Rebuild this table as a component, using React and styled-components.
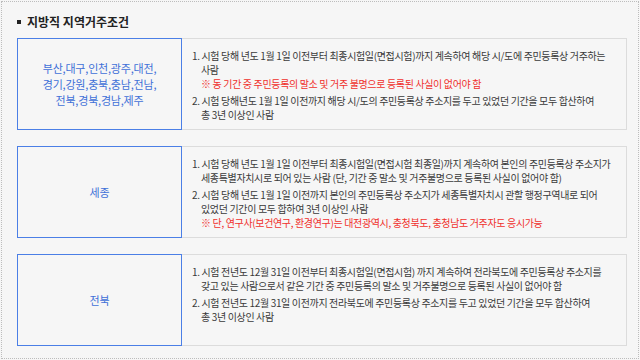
import styled, { createGlobalStyle } from "styled-components";

const GlobalStyle = createGlobalStyle`
  html, body {
    margin: 0;
    background: #f6f6f6;
  }
  body {
    font-family: "Noto Sans CJK KR", "Noto Sans", sans-serif;
    color: #333;
  }
`;

const Frame = styled.div`
  margin: 1px;
  width: 638px;
  height: 358px;
  box-sizing: border-box;
  border: 1px dotted #bdbdbd;
  padding: 10px 11px 0 15px;
`;

const Heading = styled.h2`
  margin: 0 0 6px;
  display: flex;
  align-items: center;
  gap: 6px;
  font-size: 12px;
  line-height: 20px;
  font-weight: 700;
  color: #222;
  font-feature-settings: "palt";
  &::before {
    content: "";
    width: 4px;
    height: 4px;
    background: #222;
  }
`;

const Rows = styled.div`
  display: flex;
  flex-direction: column;
  gap: 16px;
`;

const Row = styled.div`
  display: flex;
  height: 92px;
`;

const Region = styled.div`
  width: 165px;
  box-sizing: border-box;
  border: 1px solid #4b7fe6;
  display: flex;
  align-items: center;
  justify-content: center;
  text-align: center;
  color: #3f70d8;
  font-size: 11px;
  line-height: 16px;
  font-feature-settings: "palt";
  letter-spacing: -0.2px;
`;

const Detail = styled.div`
  flex: 1;
  box-sizing: border-box;
  border: 1px solid #dcdcdc;
  border-left: none;
  padding: 10px 10px;
  display: flex;
  flex-direction: column;
  gap: 3px;
  font-size: 10px;
  line-height: 14px;
  font-feature-settings: "palt";
  letter-spacing: -0.35px;
`;

const Item = styled.div`
  padding-left: 9px;
  text-indent: -9px;
  white-space: nowrap;
  color: #3a3a3a;
`;

const Note = styled.span`
  color: ${(p) => p.color || "#f0302c"};
`;

const regions = [
  {
    name: ["부산,대구,인천,광주,대전,", "경기,강원,충북,충남,전남,", "전북,경북,경남,제주"],
    items: [
      {
        lines: [
          "1. 시험 당해 년도 1월 1일 이전부터 최종시험일(면접시험)까지 계속하여 해당 시/도에 주민등록상 거주하는",
          "사람",
        ],
        note: "※ 동 기간 중 주민등록의 말소 및 거주 불명으로 등록된 사실이 없어야 함",
      },
      {
        lines: [
          "2. 시험 당해년도 1월 1일 이전까지 해당 시/도의 주민등록상 주소지를 두고 있었던 기간을 모두 합산하여",
          "총 3년 이상인 사람",
        ],
      },
    ],
  },
  {
    name: ["세종"],
    items: [
      {
        lines: [
          "1. 시험 당해 년도 1월 1일 이전부터 최종시험일(면접시험 최종일)까지 계속하여 본인의 주민등록상 주소지가",
          "세종특별자치시로 되어 있는 사람 (단, 기간 중 말소 및 거주불명으로 등록된 사실이 없어야 함)",
        ],
      },
      {
        lines: [
          "2. 시험 당해 년도 1월 1일 이전까지 본인의 주민등록상 주소지가 세종특별자치시 관할 행정구역내로 되어",
          "있었던 기간이 모두 합하여 3년 이상인 사람",
        ],
        note: "※ 단, 연구사(보건연구, 환경연구)는 대전광역시, 충청북도, 충청남도 거주자도 응시가능",
      },
    ],
  },
  {
    name: ["전북"],
    items: [
      {
        lines: [
          "1. 시험 전년도 12월 31일 이전부터 최종시험일(면접시험) 까지 계속하여 전라북도에 주민등록상 주소지를",
          "갖고 있는 사람으로서 같은 기간 중 주민등록의 말소 및 거주불명으로 등록된 사실이 없어야 함",
        ],
      },
      {
        lines: [
          "2. 시험 전년도 12월 31일 이전까지 전라북도에 주민등록상 주소지를 두고 있었던 기간을 모두 합산하여",
          "총 3년 이상인 사람",
        ],
      },
    ],
  },
];

export default function App() {
  return (
    <>
      <GlobalStyle />
      <Frame>
        <Heading>지방직 지역거주조건</Heading>
        <Rows>
          {regions.map((r) => (
            <Row key={r.name[0]}>
              <Region>
                <div>
                  {r.name.map((n, i) => (
                    <div key={i}>{n}</div>
                  ))}
                </div>
              </Region>
              <Detail>
                {r.items.map((it, i) => (
                  <Item key={i}>
                    {it.lines.map((l, j) => (
                      <span key={j}>
                        {j > 0 && <br />}
                        {l}
                      </span>
                    ))}
                    {it.note && (
                      <>
                        <br />
                        <Note>{it.note}</Note>
                      </>
                    )}
                  </Item>
                ))}
              </Detail>
            </Row>
          ))}
        </Rows>
      </Frame>
    </>
  );
}
